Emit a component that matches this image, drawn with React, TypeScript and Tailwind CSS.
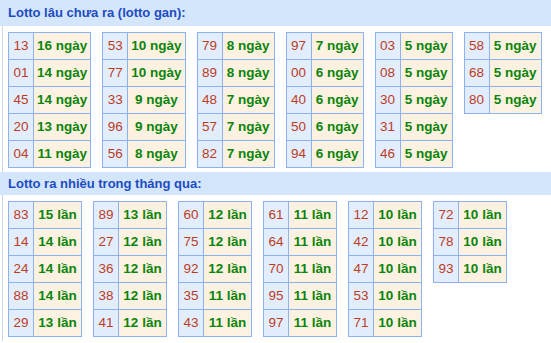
type Row = [string, string];

const gan: Row[][] = [
  [["13", "16"], ["01", "14"], ["45", "14"], ["20", "13"], ["04", "11"]],
  [["53", "10"], ["77", "10"], ["33", "9"], ["96", "9"], ["56", "8"]],
  [["79", "8"], ["89", "8"], ["48", "7"], ["57", "7"], ["82", "7"]],
  [["97", "7"], ["00", "6"], ["40", "6"], ["50", "6"], ["94", "6"]],
  [["03", "5"], ["08", "5"], ["30", "5"], ["31", "5"], ["46", "5"]],
  [["58", "5"], ["68", "5"], ["80", "5"]],
];

const nhieu: Row[][] = [
  [["83", "15"], ["14", "14"], ["24", "14"], ["88", "14"], ["29", "13"]],
  [["89", "13"], ["27", "12"], ["36", "12"], ["38", "12"], ["41", "12"]],
  [["60", "12"], ["75", "12"], ["92", "12"], ["35", "11"], ["43", "11"]],
  [["61", "11"], ["64", "11"], ["70", "11"], ["95", "11"], ["97", "11"]],
  [["12", "10"], ["42", "10"], ["47", "10"], ["53", "10"], ["71", "10"]],
  [["72", "10"], ["78", "10"], ["93", "10"]],
];

function LottoTable({ rows, unit, minW }: { rows: Row[]; unit: string; minW: string }) {
  return (
    <div className="grid grid-cols-[auto_auto] border-t border-l border-[#8cb2f0] text-[13.5px] whitespace-nowrap shrink-0">
      {rows.map(([num, count], i) => (
        <div key={i} className="contents">
          <div className="w-[25px] h-[27px] flex items-center justify-center border-r border-b border-[#8cb2f0] bg-[#e2eefd] text-[#bd3b1f]">
            {num}
          </div>
          <div className={`${minW} h-[27px] flex items-center justify-center px-[3px] border-r border-b border-[#8cb2f0] bg-[#fdf2e1] text-[#0b840b] font-bold`}>
            {count} {unit}
          </div>
        </div>
      ))}
    </div>
  );
}

function Section({ title, tables, unit, top, minW }: { title: string; tables: Row[][]; unit: string; top: string; minW: string }) {
  return (
    <div>
      <div className={`${top} flex items-center pl-[8px] bg-[#d4e6fb] text-[13px] font-bold text-[#1d4cc2]`}>
        {title}
      </div>
      <div className="ml-[2px] border-l border-[#cbd9ec] pl-[5px] pt-[6px] pb-[4px] flex items-start gap-[11px]">
        {tables.map((t, i) => (
          <LottoTable key={i} rows={t} unit={unit} minW={minW} />
        ))}
      </div>
    </div>
  );
}

export default function App() {
  return (
    <div className="w-[551px] h-[343px] overflow-hidden bg-white font-['Liberation_Sans',Arial,sans-serif]">
      <Section title="Lotto lâu chưa ra (lotto gan):" tables={gan} unit="ngày" top="h-[26px]" minW="min-w-[52px]" />
      <Section title="Lotto ra nhiều trong tháng qua:" tables={nhieu} unit="lần" top="h-[23px]" minW="min-w-[48px]" />
    </div>
  );
}
